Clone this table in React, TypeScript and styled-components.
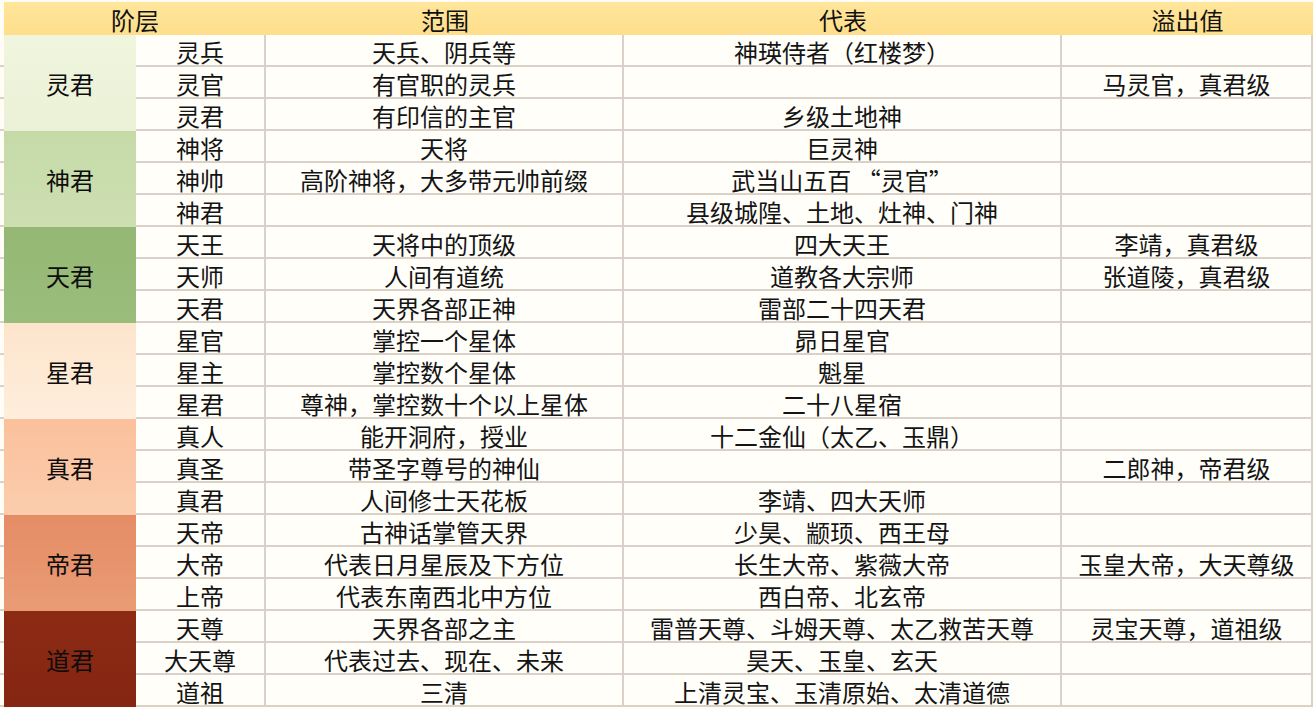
import React from "react";
import styled, { createGlobalStyle } from "styled-components";

const GlobalStyle = createGlobalStyle`
  html, body {
    margin: 0;
    padding: 0;
    background: #fffdf6;
  }
  body {
    font-family: "Noto Sans CJK SC", "Noto Sans", sans-serif;
    color: #141414;
  }
`;

const LINE = "#dad2c9";

const Sheet = styled.div`
  display: grid;
  grid-template-columns: 4px 132px 130px 358px 438px 251px;
  grid-template-rows: 33px;
  grid-auto-rows: 32px;
  padding-top: 2px;
  width: 1313px;
  font-size: 24px;
  line-height: 1;
`;

const HeadGutter = styled.div`
  grid-column: 1;
`;

const HeadCell = styled.div<{ $col: string }>`
  grid-column: ${(p) => p.$col};
  display: flex;
  align-items: center;
  justify-content: center;
  padding-top: 2px;
  background: linear-gradient(180deg, #ffe69c 0%, #fede8b 100%);
  font-weight: 400;
  color: #111;
`;

const Gutter = styled.div`
  grid-column: 1;
  border-bottom: 2px solid ${LINE};
`;

const Tier = styled.div<{ $bg: string; $bg2: string }>`
  grid-column: 2;
  grid-row: span 3;
  display: flex;
  align-items: center;
  justify-content: center;
  padding-top: 2px;
  background: linear-gradient(180deg, ${(p) => p.$bg} 0%, ${(p) => p.$bg2} 100%);
  font-weight: 400;
  color: #0d0d0d;
`;

const Cell = styled.div<{ $col: number }>`
  grid-column: ${(p) => p.$col};
  box-sizing: border-box;
  display: flex;
  align-items: center;
  justify-content: center;
  padding-top: 3px;
  border-bottom: 2px solid ${LINE};
  border-right: 2px solid ${LINE};
  background: #fffef9;
  white-space: nowrap;
`;

type Row = [string, string, string, string];
type Group = { name: string; bg: string; bg2: string; rows: Row[] };

const groups: Group[] = [
  {
    name: "灵君",
    bg: "#f0f5de",
    bg2: "#ebf1d6",
    rows: [
      ["灵兵", "天兵、阴兵等", "神瑛侍者（红楼梦）", ""],
      ["灵官", "有官职的灵兵", "", "马灵官，真君级"],
      ["灵君", "有印信的主官", "乡级土地神", ""],
    ],
  },
  {
    name: "神君",
    bg: "#c6daa8",
    bg2: "#cddfb1",
    rows: [
      ["神将", "天将", "巨灵神", ""],
      ["神帅", "高阶神将，大多带元帅前缀", "武当山五百 “灵官”", ""],
      ["神君", "", "县级城隍、土地、灶神、门神", ""],
    ],
  },
  {
    name: "天君",
    bg: "#94b874",
    bg2: "#9bbd7c",
    rows: [
      ["天王", "天将中的顶级", "四大天王", "李靖，真君级"],
      ["天师", "人间有道统", "道教各大宗师", "张道陵，真君级"],
      ["天君", "天界各部正神", "雷部二十四天君", ""],
    ],
  },
  {
    name: "星君",
    bg: "#fde4cc",
    bg2: "#feeedc",
    rows: [
      ["星官", "掌控一个星体", "昴日星官", ""],
      ["星主", "掌控数个星体", "魁星", ""],
      ["星君", "尊神，掌控数十个以上星体", "二十八星宿", ""],
    ],
  },
  {
    name: "真君",
    bg: "#fbc09c",
    bg2: "#fbcdad",
    rows: [
      ["真人", "能开洞府，授业", "十二金仙（太乙、玉鼎）", ""],
      ["真圣", "带圣字尊号的神仙", "", "二郎神，帝君级"],
      ["真君", "人间修士天花板", "李靖、四大天师", ""],
    ],
  },
  {
    name: "帝君",
    bg: "#e58c66",
    bg2: "#e99c74",
    rows: [
      ["天帝", "古神话掌管天界", "少昊、颛顼、西王母", ""],
      ["大帝", "代表日月星辰及下方位", "长生大帝、紫薇大帝", "玉皇大帝，大天尊级"],
      ["上帝", "代表东南西北中方位", "西白帝、北玄帝", ""],
    ],
  },
  {
    name: "道君",
    bg: "#8c2a14",
    bg2: "#852612",
    rows: [
      ["天尊", "天界各部之主", "雷普天尊、斗姆天尊、太乙救苦天尊", "灵宝天尊，道祖级"],
      ["大天尊", "代表过去、现在、未来", "昊天、玉皇、玄天", ""],
      ["道祖", "三清", "上清灵宝、玉清原始、太清道德", ""],
    ],
  },
];

export default function App() {
  return (
    <>
      <GlobalStyle />
      <Sheet>
        <HeadGutter />
        <HeadCell $col="2 / span 2">阶层</HeadCell>
        <HeadCell $col="4">范围</HeadCell>
        <HeadCell $col="5">代表</HeadCell>
        <HeadCell $col="6">溢出值</HeadCell>
        {groups.map((g) =>
          g.rows.map((r, i) => (
            <React.Fragment key={g.name + r[0]}>
              <Gutter />
              {i === 0 && (
                <Tier $bg={g.bg} $bg2={g.bg2}>
                  {g.name}
                </Tier>
              )}
              <Cell $col={3}>{r[0]}</Cell>
              <Cell $col={4}>{r[1]}</Cell>
              <Cell $col={5}>{r[2]}</Cell>
              <Cell $col={6}>{r[3]}</Cell>
            </React.Fragment>
          ))
        )}
      </Sheet>
    </>
  );
}
